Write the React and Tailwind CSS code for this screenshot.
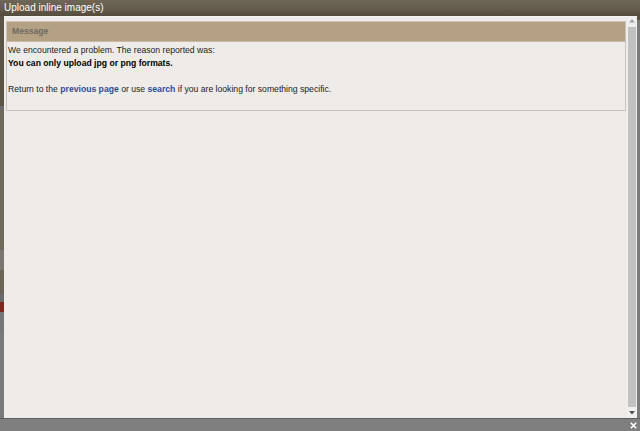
export default function App() {
  const f = { fontFamily: '"Liberation Sans", Arial, sans-serif' };
  return (
    <div className="w-[640px] h-[431px] overflow-hidden bg-[#7f7f7f] flex flex-col" style={f}>
      {/* title bar */}
      <div className="h-[16px] shrink-0 bg-gradient-to-b from-[#6e6656] via-[#665d4e] to-[#564c3d] flex items-center pl-[4px]">
        <span className="text-white text-[10px] leading-none">Upload inline image(s)</span>
      </div>
      <div className="h-[402px] shrink-0 flex">
        {/* left strip (page behind) */}
        <div className="w-[4px] flex flex-col">
          <div className="h-[90px] bg-[#5c5446]"></div>
          <div className="h-[4px] bg-[#6a6a6a]"></div>
          <div className="h-[140px] bg-[#6f685d]"></div>
          <div className="h-[20px] bg-[#7a7671]"></div>
          <div className="h-[24px] bg-[#6b6355]"></div>
          <div className="h-[8px] bg-[#6a6a6a]"></div>
          <div className="h-[10px] bg-[#7c2a1c]"></div>
          <div className="h-[20px] bg-[#777777]"></div>
          <div className="flex-1 bg-[#7a7a7a]"></div>
        </div>
        {/* content */}
        <div className="flex-1 bg-[#efebe8] border-t border-[#f7f5f3] pt-[4px] pl-[2px] pr-[1px]">
          <div className="border border-[#cbc3ba] bg-[#efebe8] h-[90px]">
            <div className="h-[20px] bg-[#b4a082] border-b border-[#c9bba6] flex items-center pl-[5px]">
              <span className="text-[8.6px] font-bold text-[#6e6a64] leading-none">Message</span>
            </div>
            <div className="pt-[2px] pl-[1px] text-[8.65px] leading-[13px] text-[#1c1c1c]">
              <div>We encountered a problem. The reason reported was:</div>
              <div className="font-bold text-black">You can only upload jpg or png formats.</div>
              <div>&nbsp;</div>
              <div>
                Return to the <span className="font-bold text-[#2f4a9e]">previous page</span> or use{" "}
                <span className="font-bold text-[#2f4a9e]">search</span> if you are looking for something specific.
              </div>
            </div>
          </div>
        </div>
        {/* scrollbar */}
        <div className="w-[10px] bg-[#efefef] flex flex-col items-center pt-[3px] pb-[3px]">
          <svg width="6" height="4" viewBox="0 0 6 4"><path d="M3 0 L6 3.5 L0 3.5 Z" fill="#a3a3a3" /></svg>
          <div className="mt-[4px] w-[8px] flex-1 bg-[#c1c1c1]"></div>
          <div className="mt-[4px]">
            <svg width="6" height="4" viewBox="0 0 6 4"><path d="M0 0 L6 0 L3 3.5 Z" fill="#505050" /></svg>
          </div>
        </div>
        <div className="w-[3px] flex flex-col">
          <div className="h-[4px] bg-[#5a5040]"></div>
          <div className="flex-1 bg-[#7a7a7a]"></div>
        </div>
      </div>
      {/* bottom bar */}
      <div className="flex-1 border-t border-[#5e5e5e] flex items-center justify-end pr-[3px]">
        <svg width="7" height="7" viewBox="0 0 7 7">
          <path d="M0.8 0.8 L6.2 6.2 M6.2 0.8 L0.8 6.2" stroke="#ffffff" strokeWidth="1.6" />
        </svg>
      </div>
    </div>
  );
}
